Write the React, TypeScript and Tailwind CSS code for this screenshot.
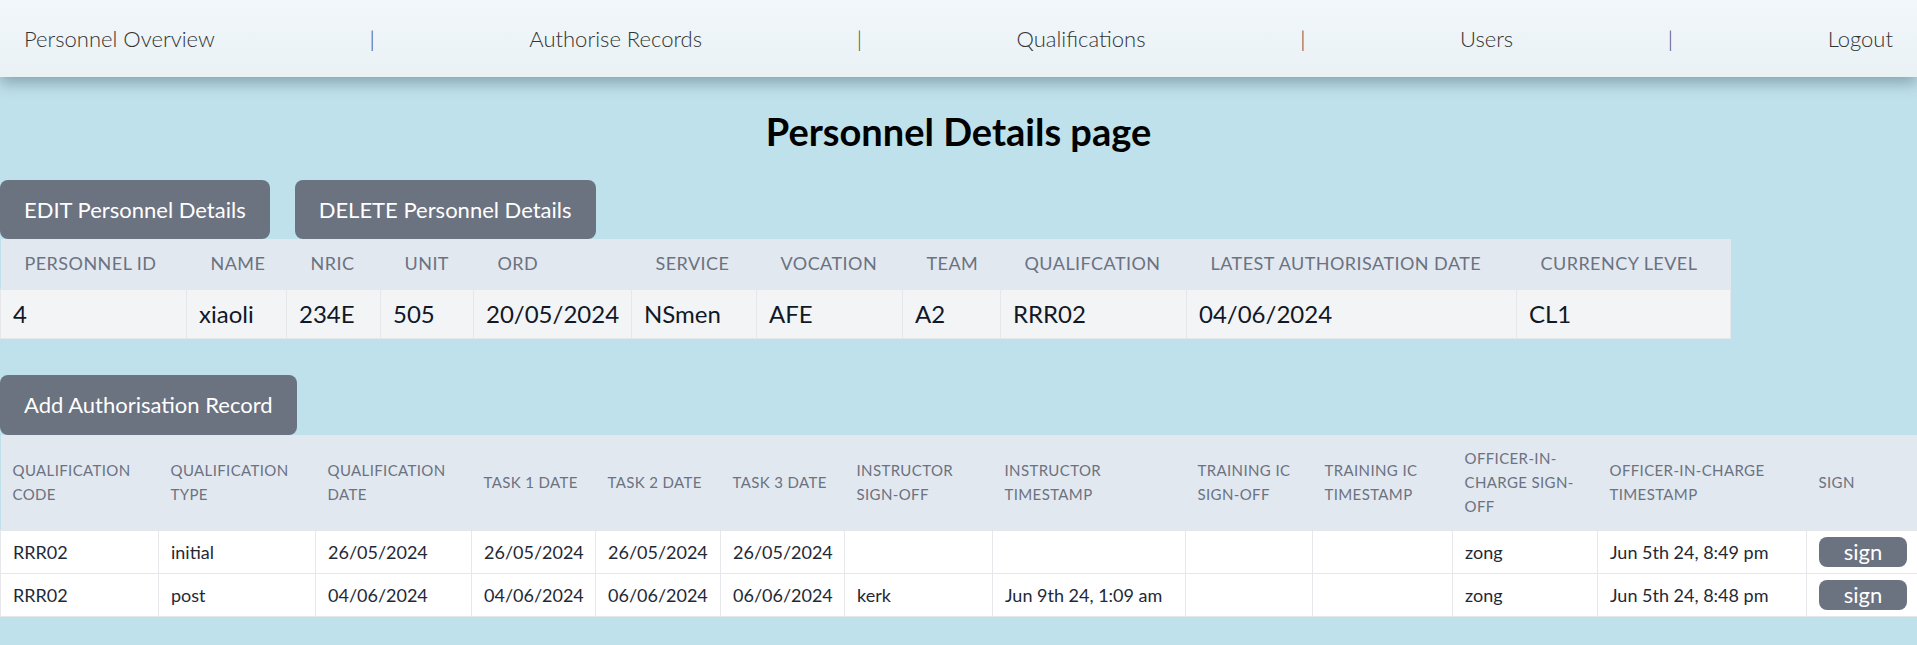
import * as React from 'react';

const navItems = ['Personnel Overview', 'Authorise Records', 'Qualifications', 'Users', 'Logout'];

const personnelCols = [
  { label: 'Personnel ID', w: 186 },
  { label: 'Name', w: 100 },
  { label: 'NRIC', w: 94 },
  { label: 'Unit', w: 93 },
  { label: 'ORD', w: 158 },
  { label: 'Service', w: 125 },
  { label: 'Vocation', w: 146 },
  { label: 'Team', w: 98 },
  { label: 'Qualifcation', w: 186 },
  { label: 'Latest Authorisation Date', w: 330 },
  { label: 'Currency Level', w: 214 },
];

const personnelRow = ['4', 'xiaoli', '234E', '505', '20/05/2024', 'NSmen', 'AFE', 'A2', 'RRR02', '04/06/2024', 'CL1'];

const recordCols = [
  { label: 'Qualification Code', w: 158 },
  { label: 'Qualification Type', w: 157 },
  { label: 'Qualification Date', w: 156 },
  { label: 'Task 1 Date', w: 124 },
  { label: 'Task 2 Date', w: 125 },
  { label: 'Task 3 Date', w: 124 },
  { label: 'Instructor Sign-off', w: 148 },
  { label: 'Instructor Timestamp', w: 193 },
  { label: 'Training IC Sign-off', w: 127 },
  { label: 'Training IC Timestamp', w: 140 },
  { label: 'Officer-in-charge Sign-off', w: 145 },
  { label: 'Officer-in-charge Timestamp', w: 209 },
  { label: 'Sign', w: 111 },
];

const records = [
  ['RRR02', 'initial', '26/05/2024', '26/05/2024', '26/05/2024', '26/05/2024', '', '', '', '', 'zong', 'Jun 5th 24, 8:49 pm'],
  ['RRR02', 'post', '04/06/2024', '04/06/2024', '06/06/2024', '06/06/2024', 'kerk', 'Jun 9th 24, 1:09 am', '', '', 'zong', 'Jun 5th 24, 8:48 pm'],
];

function ActionButton({ children }: { children: React.ReactNode }) {
  return (
    <button className="h-[59px] px-6 rounded-lg bg-[#6b7280] text-white text-[22px]">
      {children}
    </button>
  );
}

export default function App() {
  return (
    <div className="min-h-[645px] bg-[#bfe1ec] font-['Lato',sans-serif] text-[#111827]">
      <nav className="h-[77px] px-6 flex items-center justify-between bg-gradient-to-b from-[#f1f7fa] to-[#eaf1f4] shadow-[0_6px_14px_rgba(60,90,105,0.45)] text-[22px] font-light text-[#333] relative">
        {navItems.map((item, i) => (
          <React.Fragment key={item}>
            {i > 0 && <span className="text-[#444]">|</span>}
            <span>{item}</span>
          </React.Fragment>
        ))}
      </nav>

      <h1 className="mt-[34px] mb-[29px] text-center text-[38px] font-bold leading-[40px] text-black">
        Personnel Details page
      </h1>

      <div className="flex gap-[25px]">
        <ActionButton>EDIT Personnel Details</ActionButton>
        <ActionButton>DELETE Personnel Details</ActionButton>
      </div>

      <table className="table-fixed border-collapse w-[1730px]">
        <colgroup>
          {personnelCols.map((c) => (
            <col key={c.label} style={{ width: c.w }} />
          ))}
        </colgroup>
        <thead>
          <tr className="h-[50px] bg-[#e2e8f0]">
            {personnelCols.map((c) => (
              <th key={c.label} className="px-6 text-left font-normal uppercase tracking-wide text-[18px] text-[#6b7280] whitespace-nowrap">
                {c.label}
              </th>
            ))}
          </tr>
        </thead>
        <tbody>
          <tr className="h-[49px] bg-[#f3f4f6]">
            {personnelRow.map((v, i) => (
              <td key={i} className="px-3 text-[24px] border border-[#e5e7eb] whitespace-nowrap">
                {v}
              </td>
            ))}
          </tr>
        </tbody>
      </table>

      <div className="mt-[36px] flex">
        <button className="h-[60px] px-6 rounded-lg bg-[#6b7280] text-white text-[22px]">
          Add Authorisation Record
        </button>
      </div>

      <table className="table-fixed border-collapse w-full">
        <colgroup>
          {recordCols.map((c) => (
            <col key={c.label} style={{ width: c.w }} />
          ))}
        </colgroup>
        <thead>
          <tr className="h-[96px] bg-[#e2e8f0]">
            {recordCols.map((c) => (
              <th key={c.label} className="px-3 text-left font-normal uppercase tracking-wide text-[15px] leading-[24px] text-[#6b7280]">
                {c.label}
              </th>
            ))}
          </tr>
        </thead>
        <tbody>
          {records.map((r, ri) => (
            <tr key={ri} className="h-[43px] bg-white">
              {r.map((v, i) => (
                <td key={i} className="px-3 text-[18px] text-[#1f2937] border border-[#e5e7eb] whitespace-nowrap">
                  {v}
                </td>
              ))}
              <td className="px-3 border border-[#e5e7eb]">
                <button className="w-[88px] h-[30px] rounded-lg bg-[#6b7280] text-white text-[22px] leading-[30px]">
                  sign
                </button>
              </td>
            </tr>
          ))}
        </tbody>
      </table>
      <div className="h-[30px]" />
    </div>
  );
}
